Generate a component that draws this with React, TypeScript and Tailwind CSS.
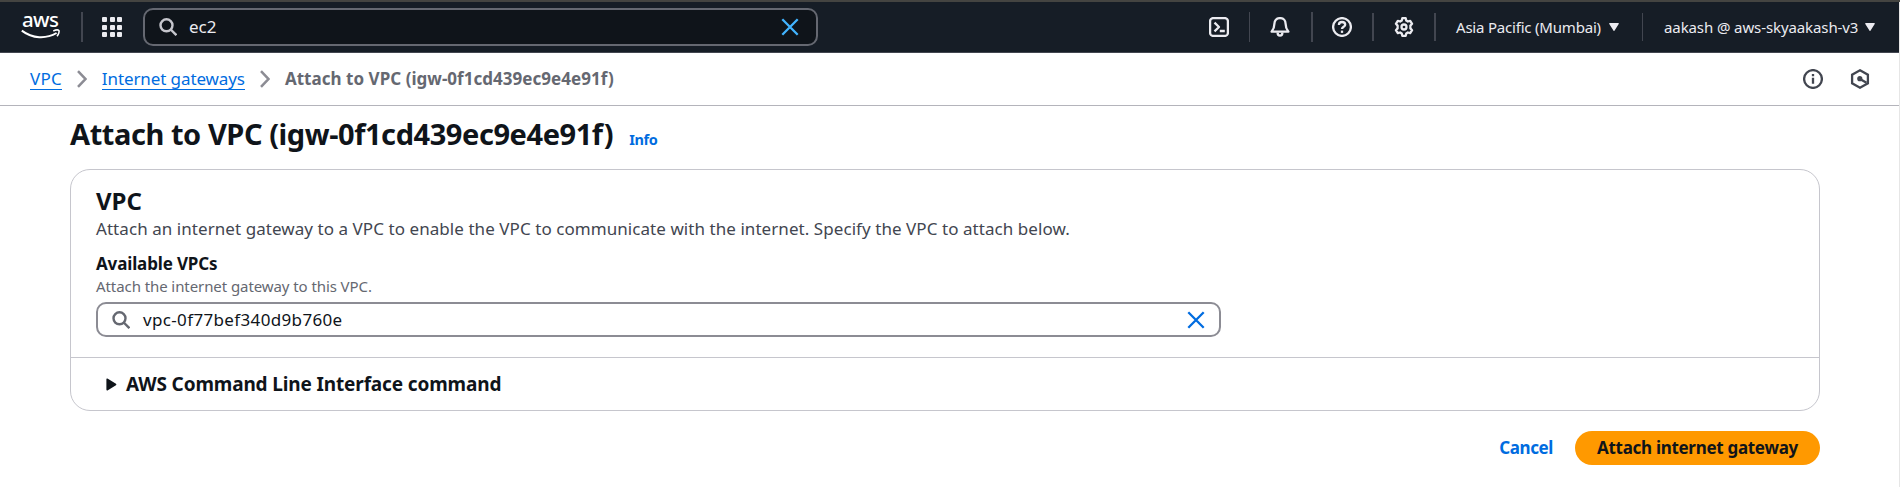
import type { ReactNode } from 'react';

function Divider({ className }: { className: string }) {
  return <span className={`shrink-0 bg-[#424650] ${className}`} />;
}

function SearchIcon({ className }: { className: string }) {
  return (
    <svg viewBox="0 0 18 18" className={`h-[18px] w-[18px] shrink-0 ${className}`} fill="none" stroke="currentColor" strokeWidth="2.4">
      <circle cx="7.5" cy="7.3" r="6" />
      <path d="M11.7 11.5 17.4 17.2" />
    </svg>
  );
}

function CloseIcon({ className }: { className: string }) {
  return (
    <svg viewBox="0 0 18 18" className={`h-[18px] w-[18px] shrink-0 ${className}`} fill="none" stroke="currentColor" strokeWidth="2.3">
      <path d="M1.3 1.3 16.7 16.7M16.7 1.3 1.3 16.7" />
    </svg>
  );
}

function BarIcon({ children, className = '' }: { children: ReactNode; className?: string }) {
  return (
    <svg viewBox="0 0 20 20" className={`h-5 w-5 shrink-0 ${className}`} fill="none" stroke="currentColor" strokeWidth="2.3" strokeLinejoin="round">
      {children}
    </svg>
  );
}

function Caret() {
  return (
    <svg viewBox="0 0 10 8" className="h-2 w-2.5 shrink-0" fill="currentColor">
      <path d="M.9 0h8.2a.7.7 0 0 1 .6 1.1L5.6 7.6a.7.7 0 0 1-1.2 0L.3 1.1A.7.7 0 0 1 .9 0Z" />
    </svg>
  );
}

function Chevron({ className }: { className: string }) {
  return (
    <svg viewBox="0 0 10 18" className={`h-[18px] w-2.5 shrink-0 text-[#8c8c94] ${className}`} fill="none" stroke="currentColor" strokeWidth="2.5">
      <path d="M1 1.2 8.4 9 1 16.8" />
    </svg>
  );
}

function AwsLogo() {
  return (
    <svg viewBox="0 0 42 44" className="ml-5 h-11 w-[42px] shrink-0" fill="none">
      <text x="2" y="21.8" fill="#fff" fontSize="20.5" fontWeight="500" textLength="37" fontFamily="Noto Sans, sans-serif">
        aws
      </text>
      <path d="M1.8 25.6C12.5 33.800 26 34.200 36.600 28" stroke="#fff" strokeWidth="2" />
      <path d="M33.300 26c2.400-1.200 5-1.100 5.600-.5.5.8 0 3.600-1.900 5.700" stroke="#fff" strokeWidth="1.600" />
    </svg>
  );
}

function TopBar() {
  return (
    <header className="flex h-[53px] items-center border-t-2 border-b border-t-[#444441] border-b-[#424650] bg-[#161d26] text-[#ebebf0]">
      <AwsLogo />
      <Divider className="ml-[19px] h-[30px] w-0.5" />
      <div className="ml-[19px] grid shrink-0 grid-cols-3 gap-[2.5px]">
        {Array.from({ length: 9 }, (_, i) => (
          <span key={i} className="h-[5px] w-[5px] rounded-[1px] bg-[#ebebf0]" />
        ))}
      </div>
      <div className="ml-[21px] flex h-[38px] w-[675px] shrink-0 items-center rounded-[10px] border-2 border-[#656871] bg-[#0f141a] pr-[17px] pl-[14px]">
        <SearchIcon className="text-[#c6c6cd]" />
        <span className="ml-3 flex-1 text-[17px]">ec2</span>
        <CloseIcon className="text-[#42b4ff]" />
      </div>
      <div className="ml-auto flex shrink-0 items-center">
        <BarIcon>
          <rect x="1.1" y="1.1" width="17.8" height="17.8" rx="3" />
          <path d="M5.5 5.6 10 10l-4.5 4.4M10.8 14h5" />
        </BarIcon>
        <Divider className="ml-5 h-[30px] w-px" />
        <BarIcon className="ml-5">
          <path d="M10 1.1c-3.6 0-5.6 2.5-5.6 5.6 0 4.3-1.2 6-2.8 8h16.8c-1.6-2-2.8-3.7-2.8-8 0-3.1-2-5.600-5.600-5.600Z" />
          <path d="M7.600 15.500c0 2.200 1 3.200 2.400 3.200s2.400-1 2.400-3.200" />
        </BarIcon>
        <Divider className="ml-[21px] h-[30px] w-0.5" />
        <BarIcon className="ml-[19px]">
          <circle cx="10" cy="10" r="8.900" />
          <path d="M6.900 7.900C6.900 6 8.200 5 10 5s3.200 1.100 3.200 2.700c0 2-3.200 2.100-3.200 4.300" strokeLinejoin="miter" />
          <path d="M10 13.600v2.300" />
        </BarIcon>
        <Divider className="ml-5 h-7 w-0.5" />
        <BarIcon className="ml-5">
          <path d="M8.300 1.200h3.400l.6 2.400 1.500.9 2.400-.7 1.900 3-1.700 1.800v2.800l1.700 1.800-1.900 3-2.400-.7-1.500.9-.6 2.400H8.300l-.6-2.400-1.500-.9-2.400.7-1.900-3 1.700-1.800V8.600L1.900 6.800l1.900-3 2.400.7 1.500-.9Z" />
          <circle cx="10" cy="10" r="2.500" />
        </BarIcon>
        <Divider className="ml-5 h-7 w-0.5" />
        <button className="ml-5 flex items-center text-[15px]">
          <span className="w-[153px] text-left tracking-[-0.2px] whitespace-nowrap">Asia Pacific (Mumbai)</span>
          <Caret />
        </button>
        <Divider className="ml-[23px] h-7 w-px" />
        <button className="ml-[21px] flex items-center text-[15px]">
          <span className="w-[201px] text-left tracking-[-0.1px] whitespace-nowrap">aakash @ aws-skyaakash-v3</span>
          <Caret />
        </button>
      </div>
      <div className="w-6 shrink-0" />
    </header>
  );
}

function Breadcrumbs() {
  return (
    <nav className="flex h-[53px] items-center border-b border-[#b4b4bb] pr-[29px] pl-[30px] text-[17px] leading-5 text-[#006ce0]">
      <a className="border-b border-[#006ce0] tracking-[0.2px]">VPC</a>
      <Chevron className="ml-[15px]" />
      <a className="ml-[15px] border-b border-[#006ce0] tracking-[-0.1px] whitespace-nowrap">Internet gateways</a>
      <Chevron className="ml-[15px]" />
      <span className="ml-[15px] font-bold tracking-[0.03px] whitespace-nowrap text-[#656871]">
        Attach to VPC (igw-0f1cd439ec9e4e91f)
      </span>
      <div className="ml-auto flex items-center gap-[27px] text-[#424650]">
        <BarIcon>
          <circle cx="10" cy="10" r="8.900" />
          <path d="M10 5v2.300M10 8.800v6" />
        </BarIcon>
        <BarIcon>
          <path d="m10 1.300 7.900 4.400v8.600L10 18.700l-7.900-4.400V5.700Z" strokeLinejoin="miter" />
          <circle cx="9.800" cy="9.700" r="2.600" fill="currentColor" stroke="none" />
          <path d="m10 10 6.500 3.700" strokeWidth="2.400" />
        </BarIcon>
      </div>
    </nav>
  );
}

export default function App() {
  return (
    <div className="flex h-[487px] w-[1900px] overflow-hidden bg-white font-['Noto_Sans',sans-serif] text-[#0f141a]">
      <div className="min-w-0 flex-1">
        <TopBar />
        <Breadcrumbs />
        <main className="ml-[70px] w-[1750px] pt-[10px]">
          <div className="flex items-baseline">
            <h1 className="text-[29px] leading-9 font-bold tracking-[-0.43px] whitespace-nowrap">
              Attach to VPC (igw-0f1cd439ec9e4e91f)
            </h1>
            <a className="ml-4 text-[14.500px] font-bold tracking-[-0.4px] text-[#006ce0]">Info</a>
          </div>

          <section className="mt-[17px] rounded-[20px] border border-[#c6c6cd]">
            <div className="px-[25px] pt-4 pb-5">
              <h2 className="text-2xl leading-[30px] font-bold">VPC</h2>
              <p className="mt-px text-[17px] leading-6 tracking-[0.06px] text-[#424650]">
                Attach an internet gateway to a VPC to enable the VPC to communicate with the internet. Specify the VPC to attach below.
              </p>
              <label className="mt-3 block text-[17px] leading-[22px] font-bold tracking-[-0.14px]">Available VPCs</label>
              <p className="mt-px text-[15px] leading-5 tracking-[-0.08px] text-[#656871]">Attach the internet gateway to this VPC.</p>
              <div className="mt-1.5 flex h-[35px] w-[1125px] items-center rounded-[10px] border-2 border-[#8c8c94] pr-[14px] pl-[14px]">
                <SearchIcon className="text-[#656871]" />
                <span className="ml-[13px] flex-1 text-[17px] tracking-[0.35px]">vpc-0f77bef340d9b760e</span>
                <CloseIcon className="text-[#006ce0]" />
              </div>
            </div>
            <div className="flex h-[53px] items-center border-t border-[#c6c6cd] pl-[35px]">
              <svg viewBox="0 0 11 14" className="h-[13px] w-[11px] shrink-0" fill="currentColor">
                <path d="M0 1.500A1 1 0 0 1 1.600.7l8.700 5.500a1 1 0 0 1 0 1.600l-8.700 5.500A1 1 0 0 1 0 12.500Z" />
              </svg>
              <span className="ml-[9px] text-[19px] font-bold tracking-[-0.14px]">AWS Command Line Interface command</span>
            </div>
          </section>

          <div className="mt-5 flex items-center justify-end text-[17px] leading-[34px] font-bold">
            <button className="mr-[22px] tracking-[-0.4px] text-[#006ce0]">Cancel</button>
            <button className="h-[34px] w-[245px] rounded-full bg-[#ff9900] tracking-[-0.3px] whitespace-nowrap">
              Attach internet gateway
            </button>
          </div>
        </main>
      </div>
      <div className="w-px shrink-0 border-t-2 border-t-[#444441] bg-[#e6e6e6]" />
    </div>
  );
}
